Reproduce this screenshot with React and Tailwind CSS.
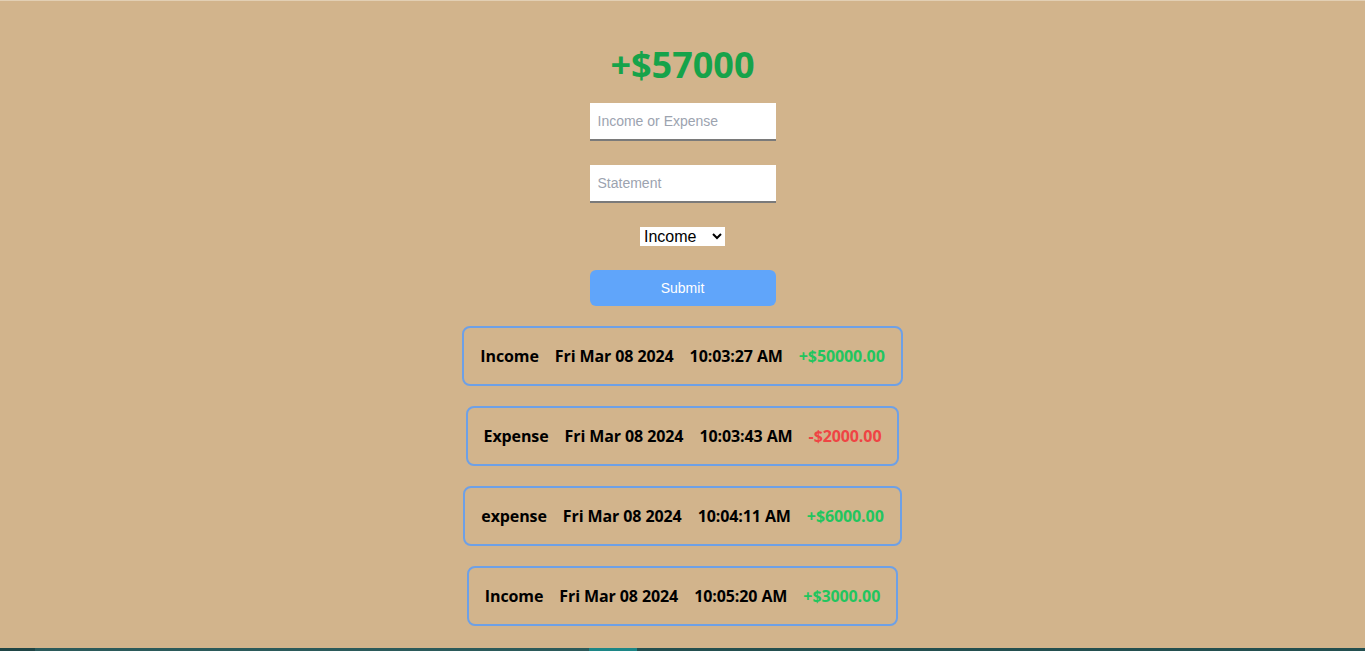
import { useState } from 'react'

const transactions = [
  { label: 'Income', date: 'Fri Mar 08 2024', time: '10:03:27 AM', amount: '+$50000.00', positive: true },
  { label: 'Expense', date: 'Fri Mar 08 2024', time: '10:03:43 AM', amount: '-$2000.00', positive: false },
  { label: 'expense', date: 'Fri Mar 08 2024', time: '10:04:11 AM', amount: '+$6000.00', positive: true },
  { label: 'Income', date: 'Fri Mar 08 2024', time: '10:05:20 AM', amount: '+$3000.00', positive: true },
]

export default function App() {
  const [type, setType] = useState('income')

  return (
    <div className="h-[651px] flex flex-col bg-[#d2b48c] border-t border-[#e2cfb4] overflow-hidden">
      <div className="flex-1 flex flex-col items-center pt-[44px]">
        <h1 className="text-[36px] leading-[40px] font-bold text-[#16a34a] font-['Open_Sans',sans-serif]">+$57000</h1>

        <form className="flex flex-col items-center gap-6 mt-[18px] font-['Liberation_Sans',Arial,sans-serif]" onSubmit={e => e.preventDefault()}>
          <input
            type="text"
            placeholder="Income or Expense"
            className="w-[186px] h-[38px] bg-white px-2 text-sm border-b-2 border-[#7a7a7a] placeholder:text-[#9ca3af] outline-none"
          />
          <input
            type="text"
            placeholder="Statement"
            className="w-[186px] h-[38px] bg-white px-2 text-sm border-b-2 border-[#7a7a7a] placeholder:text-[#9ca3af] outline-none"
          />
          <select
            value={type}
            onChange={e => setType(e.target.value)}
            className="w-[85px] h-[19px] bg-white text-base leading-none text-black"
          >
            <option value="income">Income</option>
            <option value="expense">Expense</option>
          </select>
          <button type="submit" className="w-[186px] h-9 rounded-md bg-[#60a5fa] text-white text-sm">
            Submit
          </button>
        </form>

        <div className="flex flex-col items-center gap-5 mt-5 font-['Open_Sans',sans-serif] tracking-[-0.1px]">
          {transactions.map((t, i) => (
            <div key={i} className="flex items-center gap-4 px-4 py-4 border-2 border-[#6ea0e6] rounded-lg text-base leading-6 font-bold text-black">
              <span>{t.label}</span>
              <span>{t.date}</span>
              <span>{t.time}</span>
              <span className={t.positive ? 'text-[#22c55e]' : 'text-[#ef4444]'}>{t.amount}</span>
            </div>
          ))}
        </div>
      </div>

      <div className="h-[3px] flex shrink-0">
        <div className="w-[35px] bg-[#1f4545]" />
        <div className="w-[554px] bg-[#2b5a5a]" />
        <div className="w-[48px] bg-[#1c8686]" />
        <div className="flex-1 bg-[#234f4f]" />
      </div>
    </div>
  )
}
